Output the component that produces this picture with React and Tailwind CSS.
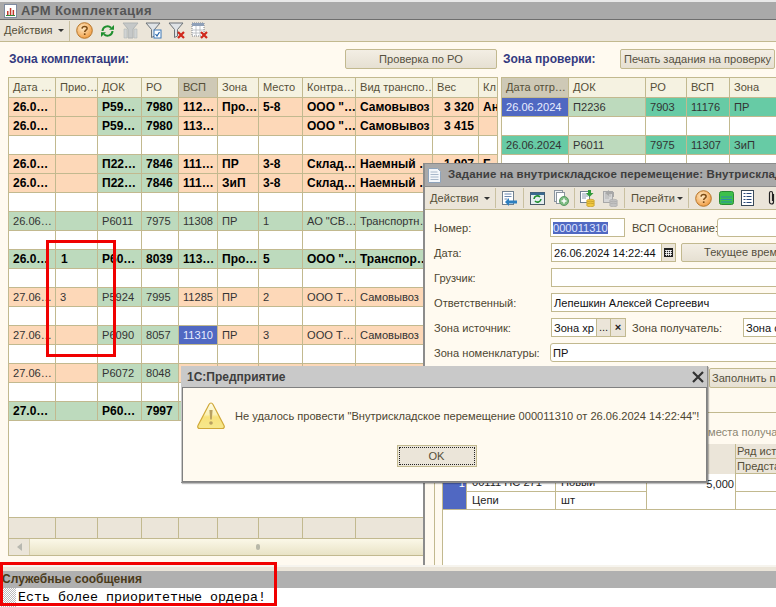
import React from 'react'

const ArrowDown = () => <span className="inline-block w-0 h-0 border-l-[3px] border-r-[3px] border-t-[3px] border-l-transparent border-r-transparent border-t-[#333]" />
const Sep = ({ className }) => <span className={`w-px h-[20px] bg-[#c9c0a0] ${className}`} />

const IconHelp = () => (
  <svg width="17" height="17" viewBox="0 0 17 17">
    <defs>
      <radialGradient id="hlp" cx="40%" cy="35%" r="70%">
        <stop offset="0%" stopColor="#ffe9c4" />
        <stop offset="100%" stopColor="#f09a3e" />
      </radialGradient>
    </defs>
    <circle cx="8.5" cy="8.5" r="7.8" fill="url(#hlp)" stroke="#b5752a" />
    <path d="M6 6.6c.2-1.500 1.300-2.100 2.600-2.100 1.400 0 2.500.8 2.500 2 0 1.700-2.400 1.700-2.400 3.500" fill="none" stroke="#7a4a14" strokeWidth="1.500" />
    <rect x="7.900" y="11.300" width="1.600" height="1.700" fill="#7a4a14" />
  </svg>
)
const IconRefresh = () => (
  <svg width="15" height="14" viewBox="0 0 15 14" fill="none">
    <path d="M2.500 7a5 5 0 0 1 8.500-3.300" stroke="#1f8f2f" strokeWidth="2" />
    <path d="M9 5.800h5V1z" fill="#1f8f2f" />
    <path d="M12.500 7a5 5 0 0 1-8.500 3.300" stroke="#1f8f2f" strokeWidth="2" />
    <path d="M6 8.200H1V13z" fill="#1f8f2f" />
  </svg>
)
const IconFilterGrey = () => (
  <svg width="17" height="17" viewBox="0 0 17 17">
    <path d="M1 1h15l-5 6v9H6V7z" fill="#c5c8c8" stroke="#b0b4b4" />
    <path d="M2 7h3v9H2zM12 7h3v9h-3z" fill="#d0d3d3" stroke="#b4b8b8" strokeWidth=".6" />
  </svg>
)
const IconFilter = ({ fill = '#dfe3e6' }) => (
  <path d="M1 1h14L9.500 7.500V14L6.500 15.500V7.500z" fill={fill} stroke="#6d7378" />
)
const IconFilterCheck = () => (
  <svg width="17" height="17" viewBox="0 0 17 17">
    <IconFilter />
    <rect x="9" y="8" width="7" height="8" fill="#fff" stroke="#3d78b8" />
    <path d="M10.500 12l1.500 2 2.500-4" fill="none" stroke="#2262a8" strokeWidth="1.200" />
  </svg>
)
const RedX = ({ x = 9, y = 9 }) => (
  <path d={`M${x} ${y}l6 6m0-6l-6 6`} stroke="#d0281c" strokeWidth="2.200" fill="none" />
)
const IconFilterX = () => (
  <svg width="17" height="17" viewBox="0 0 17 17">
    <IconFilter />
    <RedX x={10} y={10} />
  </svg>
)
const IconTableX = () => (
  <svg width="17" height="17" viewBox="0 0 17 17">
    <rect x="1" y="1" width="12" height="13" fill="#fff" stroke="#7a8088" strokeDasharray="1 1" />
    <rect x="1" y="1" width="12" height="3" fill="#8fa0b8" />
    <path d="M5 4v10M9 4v10M1 8h12M1 11h12" stroke="#a8adb2" strokeWidth=".7" />
    <RedX x={10} y={10} />
  </svg>
)
const IconDocArrow = () => (
  <svg width="17" height="17" viewBox="0 0 17 17">
    <rect x="1.500" y="1.500" width="11" height="13" fill="#fff" stroke="#70808f" />
    <path d="M3.500 4h7M3.500 6.500h7M3.500 9h3" stroke="#6a88b0" />
    <path d="M16 10.500H8V8l-4 4 4 4v-2.500h8z" fill="#2d7fc0" />
  </svg>
)
const IconRefreshBox = () => (
  <svg width="15" height="15" viewBox="0 0 15 15">
    <rect x=".5" y="1.500" width="14" height="12" fill="#e6eef0" stroke="#4a5a68" />
    <rect x=".5" y="1.500" width="14" height="2.500" fill="#3a6a90" />
    <path d="M4 8a3.500 3.500 0 0 1 6-2M11 8a3.500 3.500 0 0 1-6 2" fill="none" stroke="#1f8f2f" strokeWidth="1.600" />
  </svg>
)
const IconCopyPlus = () => (
  <svg width="16" height="16" viewBox="0 0 16 16">
    <rect x="1.500" y=".5" width="8" height="11" fill="#f2f4f6" stroke="#8a949e" />
    <rect x="3.500" y="2.500" width="8" height="11" fill="#fff" stroke="#8a949e" />
    <circle cx="11" cy="11" r="4.500" fill="#7dbb82" stroke="#5a9a62" />
    <path d="M11 8.500v5M8.500 11h5" stroke="#fff" strokeWidth="1.500" />
  </svg>
)
const IconDocCoins = ({ grey }) => (
  <svg width="15" height="17" viewBox="0 0 15 17">
    <rect x=".5" y="1.500" width="9" height="11" fill={grey ? '#d6d6d6' : '#fff'} stroke={grey ? '#a8a8a8' : '#70808f'} />
    <path d="M2 4h6M2 6h6M2 8h4" stroke={grey ? '#b4b4b4' : '#8a9ab0'} />
    {grey
      ? <path d="M6 0L2 3l4 3V4h3v3h2V2H6z" fill="#a8a8a8" />
      : <path d="M8 0h3v3h2.500L9.500 7 6 3h2z" fill="#2f9a3a" />}
    <ellipse cx="10.500" cy="11" rx="4" ry="1.800" fill={grey ? '#c2c2c2' : '#f0c840'} stroke={grey ? '#a8a8a8' : '#b89020'} strokeWidth=".6" />
    <ellipse cx="10.500" cy="13" rx="4" ry="1.800" fill={grey ? '#c2c2c2' : '#f0c840'} stroke={grey ? '#a8a8a8' : '#b89020'} strokeWidth=".6" />
    <ellipse cx="10.500" cy="15" rx="4" ry="1.800" fill={grey ? '#c2c2c2' : '#f0c840'} stroke={grey ? '#a8a8a8' : '#b89020'} strokeWidth=".6" />
  </svg>
)
const IconGreen = () => (
  <svg width="15" height="14" viewBox="0 0 15 14">
    <rect x=".5" y=".5" width="14" height="13" rx="2" fill="#3cc04a" stroke="#2a8a34" />
    <path d="M2 6h11M2 8.500h11M2 11h11" stroke="#2d8aa8" />
  </svg>
)
const IconDocLines = () => (
  <svg width="13" height="16" viewBox="0 0 13 16">
    <rect x=".5" y=".5" width="12" height="15" fill="#fff" stroke="#3a4a5a" />
    <path d="M2.500 3.500h2M5.500 3.500h5M2.500 6.500h2M5.500 6.500h5M2.500 9.500h2M5.500 9.500h5M2.500 12.500h2M5.500 12.500h5" stroke="#2a4a7a" />
  </svg>
)
const IconClip = () => (
  <svg width="7" height="16" viewBox="0 0 7 16" fill="none">
    <path d="M5.500 4v8a2 2 0 0 1-4 0V3a1.500 1.500 0 0 1 3 0v8" stroke="#222" strokeWidth="1.200" />
  </svg>
)
const IconReport = () => (
  <svg width="13" height="14" viewBox="0 0 13 14">
    <rect x=".5" y=".5" width="12" height="13" fill="#fff" stroke="#7d8aa0" />
    <path d="M3 11V7h1.500v4zM5.800 11V4h1.500v7zM8.600 11V6h1.500v5z" fill="#c0392b" />
    <path d="M2 11.500h9" stroke="#2f8a3a" />
  </svg>
)
const IconPage = () => (
  <svg width="13" height="15" viewBox="0 0 13 15">
    <path d="M.5.5h9l3 3v11H.5z" fill="#f4f7fa" stroke="#8ea4bc" />
    <path d="M2.500 4h7M2.500 6.500h8M2.500 9h8M2.500 11.500h8" stroke="#a8b8ca" />
  </svg>
)
const IconWarn = () => (
  <svg width="30" height="30" viewBox="0 0 30 30">
    <defs>
      <linearGradient id="wrn" x1="0" y1="0" x2="0" y2="1">
        <stop offset="0%" stopColor="#fdfbe8" />
        <stop offset="45%" stopColor="#fbf1b4" />
        <stop offset="55%" stopColor="#f8e27c" />
        <stop offset="100%" stopColor="#f6e88e" />
      </linearGradient>
    </defs>
    <path d="M15 2c1 0 1.500.6 2 1.500l11 21c.8 1.600 0 3-1.800 3H3.800c-1.800 0-2.600-1.400-1.800-3l11-21C13.500 2.600 14 2 15 2z" fill="url(#wrn)" stroke="#d0a838" strokeWidth="1.200" />
    <path d="M13.400 9h3.200l-.8 9.500h-1.600z" fill="#b8a060" />
    <circle cx="15" cy="22" r="1.800" fill="#b8a060" />
  </svg>
)

const peach = 'bg-[#fdd8b8]'
const green = 'bg-[#bddabd]'
const teal = 'bg-[#67cba5]'
const blue = 'bg-[#5068c2] text-[#e8ecff]'
const cellBase = 'border-r border-b border-[#c2b98f] h-[19px] leading-[19px] px-1 overflow-hidden whitespace-nowrap'
const leftCols = 'grid grid-cols-[47px_42px_44px_37px_39px_41px_44px_53px_77px_46px_19px]'
const rightCols = 'grid grid-cols-[67px_77px_41px_43px_60px]'

const leftHead = ['Дата …', 'Прио…', 'ДОК', 'РО', 'ВСП', 'Зона', 'Место', 'Контра…', 'Вид транспо…', 'Вес', 'Кл']

const leftRows = [
  { c: 'p', b: 1, v: ['26.0…', '', 'Р59…', '7980', '112…', 'Про…', '5-8', 'ООО "…', 'Самовывоз', '3 320', 'Ан'] },
  { c: 'p', b: 1, v: ['26.0…', '', 'Р59…', '7980', '113…', '', '', 'ООО "…', 'Самовывоз', '3 415', ''] },
  { c: 'w', v: [] },
  { c: 'p', b: 1, v: ['26.0…', '', 'П22…', '7846', '111…', 'ПР', '3-8', 'Склад…', 'Наемный …', '1 907', 'Б'] },
  { c: 'p', b: 1, v: ['26.0…', '', 'П22…', '7846', '111…', 'ЗиП', '3-8', 'Склад…', 'Наемный …', '', ''] },
  { c: 'w', v: [] },
  { c: 'g', v: ['26.06…', '', 'Р6011', '7975', '11308', 'ПР', '1', 'АО "СВ…', 'Транспортн…', '', ''] },
  { c: 'w', v: [] },
  { c: 'g', b: 1, v: ['26.0…', '1', 'Р60…', '8039', '113…', 'Про…', '5', 'ООО "…', 'Транспор…', '', ''] },
  { c: 'w', v: [] },
  { c: 'p', v: ['27.06…', '3', 'Р5924', '7995', '11285', 'ПР', '2', 'ООО Т…', 'Самовывоз', '', ''] },
  { c: 'w', v: [] },
  { c: 'p', sel: 4, v: ['27.06…', '', 'Р6090', '8057', '11310', 'ПР', '3', 'ООО Т…', 'Самовывоз', '', ''] },
  { c: 'w', v: [] },
  { c: 'p', v: ['27.06…', '', 'Р6072', '8048', '', '', '', '', '', '', ''] },
  { c: 'w', v: [] },
  { c: 'g', b: 1, v: ['27.0…', '', 'Р60…', '7997', '', '', '', '', '', '', ''] },
]

const LeftRow = ({ row }) => {
  const bg = row.c === 'p' ? peach : row.c === 'g' ? green : 'bg-white'
  return (
    <div className={leftCols}>
      {leftHead.map((h, i) => {
        let color = bg
        if (row.c !== 'w' && (i === 2 || i === 3)) color = green
        if (row.sel === i) color = blue
        const weight = row.b ? 'font-bold text-black text-[12px]' : 'text-[#333]'
        const align = i === 9 ? 'text-right' : ''
        const indent = i === 1 && row.b ? 'pl-[5px]' : ''
        return <div key={i} className={`${cellBase} ${color} ${weight} ${align} ${indent}`}>{row.v[i]}</div>
      })}
    </div>
  )
}

const LeftTable = () => (
  <div className="flex flex-col flex-1 border-l border-[#c2b98f] bg-white min-h-0">
    <div className={leftCols}>
      {leftHead.map((h, i) => (
        <div key={i} className={`${cellBase} h-[21px] leading-[19px] border-t ${i === 4 ? 'bg-[#cec9b6]' : 'bg-[#f5f2e1]'} text-[#554f38]`}>{h}</div>
      ))}
    </div>
    {leftRows.map((r, i) => <LeftRow key={i} row={r} />)}
    <div className="flex-1 border-r border-[#c2b98f]" />
    <div className={`${leftCols} border-t border-[#c2b98f]`}>
      {leftHead.map((h, i) => <div key={i} className="h-[20px] bg-[#ebe5d9] border-r border-[#c2b98f]" />)}
    </div>
    <div className="h-[18px] border-y border-r border-[#c2b98f] flex bg-gradient-to-b from-[#fbf8e8] to-[#e9e3c6]">
      <div className="w-[21px] flex items-center justify-center bg-[#ebe5d9] border-r border-[#d8d0b0]">
        <span className="w-0 h-0 border-y-[4px] border-r-[5px] border-y-transparent border-r-[#b8b8b0]" />
      </div>
      <div className="flex-1 flex items-center justify-center pr-[10px]">
        <span className="w-[4px] h-[6px] bg-[#b8b8a8] rounded-full" />
      </div>
    </div>
  </div>
)

const RightTable = () => {
  const rows = [
    ['26.06.2024', 'П2236', '7903', '11176', 'ПР'],
    null,
    ['26.06.2024', 'Р6011', '7975', '11307', 'ЗиП'],
    null,
  ]
  return (
    <div className="flex-1 border-l border-[#c2b98f] bg-white">
      <div className={rightCols}>
        {['Дата отгр…', 'ДОК', 'РО', 'ВСП', 'Зона'].map((h, i) => (
          <div key={i} className={`${cellBase} h-[21px] leading-[19px] border-t ${i === 0 ? 'bg-[#cec9b6]' : 'bg-[#f5f2e1]'} text-[#554f38]`}>{h}</div>
        ))}
      </div>
      {rows.map((r, ri) => (
        <div key={ri} className={rightCols}>
          {[0, 1, 2, 3, 4].map(i => {
            let color = 'bg-white'
            if (r) color = i === 1 ? green : teal
            if (r && ri === 0 && i === 0) color = blue
            return <div key={i} className={`${cellBase} ${color} text-[#333]`}>{r ? r[i] : ''}</div>
          })}
        </div>
      ))}
    </div>
  )
}

const Button = ({ className, children }) => (
  <div className={`flex items-center justify-center border border-[#c2b98f] rounded-[2px] bg-gradient-to-b from-[#f3eee4] to-[#e6e0d2] text-[#555040] ${className}`}>{children}</div>
)

const FieldLabel = ({ className, children }) => <span className={`text-[#4d4630] whitespace-nowrap pt-px ${className}`}>{children}</span>
const Input = ({ className, children }) => (
  <div className={`h-[19px] bg-white border border-[#c2b98f] leading-[18px] px-[2px] text-[#111] whitespace-nowrap overflow-hidden ${className}`}>{children}</div>
)

const fieldRow = 'flex items-center h-[19px] [&>*]:shrink-0'

const TaskWindow = () => (
  <div className="absolute left-[423px] top-[163px] w-[353px] h-[402px] flex flex-col bg-[#fffaf0] border-l-2 border-t border-[#8c8c8c] overflow-hidden">
    <div className="h-[22px] bg-[#a9a9a9] flex items-center pl-[3px] gap-[7px] shrink-0 whitespace-nowrap [&>*]:shrink-0">
      <IconPage />
      <span className="font-bold text-[#3e3e3e] text-[11.5px] tracking-[0.1px]">Задание на внутрискладское перемещение: Внутрискладское</span>
    </div>
    <div className="h-[24px] bg-[#ebe5d9] border-y border-[#8c8c8c] border-b-[#c2b98f] flex items-center pl-[5px] shrink-0 whitespace-nowrap [&>*]:shrink-0">
      <span className="text-[#554f38] w-[48px]">Действия</span>
      <span className="ml-[6px] flex"><ArrowDown /></span>
      <Sep className="ml-[5px]" />
      <span className="ml-[5px] flex"><IconDocArrow /></span>
      <Sep className="ml-[5px]" />
      <span className="ml-[6px] flex"><IconRefreshBox /></span>
      <span className="ml-[8px] flex"><IconCopyPlus /></span>
      <Sep className="ml-[5px]" />
      <span className="ml-[5px] flex"><IconDocCoins /></span>
      <span className="ml-[8px] flex"><IconDocCoins grey /></span>
      <Sep className="ml-[6px]" />
      <span className="ml-[6px] text-[#554f38] w-[42px]">Перейти</span>
      <span className="ml-[4px] flex"><ArrowDown /></span>
      <Sep className="ml-[5px]" />
      <span className="ml-[6px] flex"><IconHelp /></span>
      <span className="ml-[7px] flex"><IconGreen /></span>
      <span className="ml-[7px] flex"><IconDocLines /></span>
      <span className="ml-[14px] flex"><IconClip /></span>
    </div>
    <div className="flex flex-col gap-[6px] pl-[9px] pt-[8px] shrink-0">
      <div className={fieldRow}>
        <FieldLabel className="w-[116px]">Номер:</FieldLabel>
        <Input className="w-[75px]"><span className="bg-[#5068c2] text-[#dfe4ff]">000011310</span></Input>
        <FieldLabel className="ml-[7px] w-[85px]">ВСП Основание:</FieldLabel>
        <Input className="w-[80px] rounded-[3px]" />
      </div>
      <div className={fieldRow}>
        <FieldLabel className="w-[117px]">Дата:</FieldLabel>
        <Input className="w-[110px] border-r-0">26.06.2024 14:22:44</Input>
        <div className="w-[15px] h-[19px] bg-[#ebe5d9] border border-[#c2b98f] flex items-center justify-center">
          <svg width="9" height="9" viewBox="0 0 9 9"><rect width="9" height="9" fill="#222" /><path d="M1 2.500h7M1 4.500h7M1 6.500h7M2.500 2v6M4.500 2v6M6.500 2v6" stroke="#fff" strokeWidth=".8" /></svg>
        </div>
        <Button className="ml-[5px] w-[110px] h-[19px] justify-start pl-[22px] whitespace-nowrap">Текущее время</Button>
      </div>
      <div className={fieldRow}>
        <FieldLabel className="w-[117px]">Грузчик:</FieldLabel>
        <Input className="w-[240px]" />
      </div>
      <div className={fieldRow}>
        <FieldLabel className="w-[117px]">Ответственный:</FieldLabel>
        <Input className="w-[240px]">Лепешкин Алексей Сергеевич</Input>
      </div>
      <div className={fieldRow}>
        <FieldLabel className="w-[117px]">Зона источник:</FieldLabel>
        <Input className="w-[45px] border-r-0">Зона хр</Input>
        <div className="w-[15px] h-[19px] bg-[#ebe5d9] border border-[#c2b98f] text-center leading-[16px] text-[#222]">...</div>
        <div className="w-[15px] h-[19px] bg-[#ebe5d9] border border-l-0 border-[#c2b98f] text-center leading-[16px] font-bold text-[#222]">×</div>
        <FieldLabel className="ml-[6px] w-[111px]">Зона получатель:</FieldLabel>
        <Input className="w-[60px]">Зона с</Input>
      </div>
      <div className={fieldRow}>
        <FieldLabel className="w-[116px]">Зона номенклатуры:</FieldLabel>
        <Input className="w-[240px] rounded-[3px]">ПР</Input>
      </div>
    </div>
    <div className="flex mt-[6px] shrink-0 pl-[284px]">
      <Button className="w-[80px] h-[20px] shrink-0 justify-start pl-[2px] whitespace-nowrap">Заполнить по</Button>
    </div>
    <div className="ml-[9px] mt-[24px] flex-1 flex flex-col border-l border-t border-[#c2b98f] pl-[7px] min-h-0">
      <div className="pl-[266px] h-[31px] pt-[12px] text-[#8c8672] whitespace-nowrap leading-[14px]">места получа</div>
      <div className="flex-1 bg-white border-l border-[#c2b98f] overflow-hidden">
        <div className="grid grid-cols-[24px_89px_91px_89px_60px] text-[#222]">
          <div className="col-span-4 row-span-2 bg-[#ebe5d9] border-r border-[#c2b98f] h-[30px]" />
          <div className="h-[15px] bg-[#ebe5d9] border-b border-[#c2b98f] leading-[14px] pl-[1px] whitespace-nowrap text-[#554f38]">Ряд источ</div>
          <div className="h-[15px] bg-[#ebe5d9] border-b border-[#c2b98f] leading-[14px] pl-[1px] whitespace-nowrap text-[#554f38]">Представ</div>
          <div className="row-span-2 bg-[#5068c2] border-r border-b border-[#c2b98f] text-right text-white pr-[1px] leading-[18px]">1</div>
          <div className="h-[18px] border-r border-b border-[#c2b98f] pl-[5px] leading-[17px]">00111 НС 271</div>
          <div className="h-[18px] border-r border-b border-[#c2b98f] pl-[5px] leading-[17px]">Новый</div>
          <div className="row-span-2 border-r border-b border-[#c2b98f] text-right pr-[1px] leading-[20px]">5,000</div>
          <div className="h-[18px] border-b border-[#c2b98f]" />
          <div className="h-[18px] border-r border-b border-[#c2b98f] pl-[5px] leading-[17px]">Цепи</div>
          <div className="h-[18px] border-r border-b border-[#c2b98f] pl-[5px] leading-[17px]">шт</div>
          <div className="h-[18px] border-b border-[#c2b98f]" />
        </div>
      </div>
    </div>
  </div>
)

const AlertWindow = () => (
  <div className="absolute left-[181px] top-[366px] w-[527px] h-[117px] flex flex-col bg-[#c9c9c9] border-r border-b border-[#8c8c8c] pl-[1px] shadow-[1px_1px_1px_rgba(0,0,0,0.25)]">
    <div className="h-[21px] flex items-center justify-between pl-[5px] pr-[3px] shrink-0">
      <span className="font-bold text-[#3e3e3e] text-[12px]">1С:Предприятие</span>
      <svg width="12" height="12" viewBox="0 0 12 12"><path d="M1 1l10 10M11 1L1 11" stroke="#333" strokeWidth="2.200" /></svg>
    </div>
    <div className="flex-1 bg-[#fffaf0] border border-[#808080] flex flex-col">
      <div className="flex items-center pl-[13px] pt-[13px]">
        <span className="flex shrink-0"><IconWarn /></span>
        <span className="ml-[9px] text-[#4d4630] whitespace-nowrap">Не удалось провести "Внутрискладское перемещение 000011310 от 26.06.2024 14:22:44"!</span>
      </div>
      <div className="flex justify-center mt-[14px] pr-[16px]">
        <div className="w-[80px] h-[22px] bg-[#ebe5d9] border border-[#c2b98f] p-px">
          <div className="w-full h-full border border-dotted border-[#222] flex items-center justify-center text-[#554f38]">OK</div>
        </div>
      </div>
    </div>
  </div>
)

export default function App() {
  return (
    <div className="relative w-[776px] h-[607px] overflow-hidden flex flex-col bg-[#fffaf0] text-[11.1px] [font-family:'Liberation_Sans',Arial,sans-serif]">
      <div className="h-[20px] shrink-0 bg-[#a9a9a9] border-t-2 border-t-[#e8e8e8] border-b border-b-[#6e6e6e] flex items-center pl-[4px] gap-[4px]">
        <IconReport />
        <span className="font-bold text-[#555] text-[13px] tracking-[0.4px]">АРМ Комплектация</span>
      </div>
      <div className="h-[22px] shrink-0 bg-[#ebe5d9] border-b border-[#c2b98f] flex items-center pl-[4px] whitespace-nowrap [&>*]:shrink-0">
        <span className="text-[#554f38] w-[48px]">Действия</span>
        <span className="ml-[6px] flex"><ArrowDown /></span>
        <Sep className="ml-[5px]" />
        <span className="ml-[6px] flex"><IconHelp /></span>
        <span className="ml-[7px] flex"><IconRefresh /></span>
        <span className="ml-[7px] flex"><IconFilterGrey /></span>
        <span className="ml-[6px] flex"><IconFilterCheck /></span>
        <span className="ml-[6px] flex"><IconFilterX /></span>
        <span className="ml-[6px] flex"><IconTableX /></span>
      </div>
      <div className="flex-1 min-h-0 flex pl-[8px] pt-[7px] gap-[4px] pb-[9px]">
        <div className="w-[489px] shrink-0 flex flex-col">
          <div className="h-[20px] mb-[8px] flex items-center justify-between shrink-0">
            <span className="font-bold text-[#343a80] text-[12px] pl-[1px]">Зона комплектации:</span>
            <Button className="w-[152px] h-[20px]">Проверка по РО</Button>
          </div>
          <LeftTable />
        </div>
        <div className="flex-1 min-w-0 flex flex-col">
          <div className="h-[20px] mb-[8px] flex items-center shrink-0 pl-[2px] whitespace-nowrap">
            <span className="font-bold text-[#343a80] text-[12px] w-[117px] shrink-0">Зона проверки:</span>
            <Button className="w-[155px] h-[20px] shrink-0">Печать задания на проверку</Button>
          </div>
          <RightTable />
        </div>
      </div>
      <div className="h-[6px] shrink-0 bg-[#ebe5d9] border-t-2 border-[#f6f4ee]" />
      <div className="h-[17px] shrink-0 bg-[#b0b0b0] pl-[2px] leading-[17px] font-bold text-[12px] text-[#4a3a1a]">Служебные сообщения</div>
      <div className="h-[19px] shrink-0 bg-white flex">
        <div className="w-[16px] bg-[repeating-conic-gradient(#bbb_0_25%,#fff_0_50%)] [background-size:2px_2px]" />
        <span className="pl-[2px] text-[13.33px] leading-[19px] text-black [font-family:'Liberation_Mono',monospace]">Есть более приоритетные ордера!</span>
      </div>

      <TaskWindow />
      <AlertWindow />

      <div className="absolute left-[46px] top-[240px] w-[70px] h-[117px] border-[3px] border-[#f00000]" />
      <div className="absolute left-0 top-[562px] w-[277px] h-[44px] border-[3px] border-[#f00000]" />
    </div>
  )
}
